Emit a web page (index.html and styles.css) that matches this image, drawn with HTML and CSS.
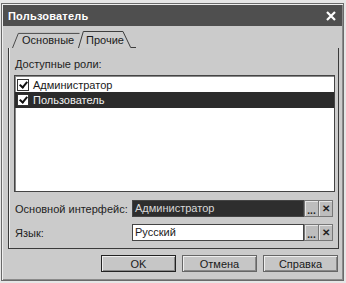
FILE: index.html
```html
<!DOCTYPE html>
<html lang="ru">
<head>
  <meta charset="UTF-8">
  <title>Пользователь</title>
  <link rel="stylesheet" href="styles.css">
</head>
<body>
  <div class="window">
    <div class="titlebar">
      <span class="title">Пользователь</span>
      <svg class="close" width="10" height="10" viewBox="0 0 10 10">
        <path d="M1 1 L9 9 M9 1 L1 9" stroke="#fff" stroke-width="2.2"/>
      </svg>
    </div>

    <!-- Tabs -->
    <div class="tabs">
      <div class="tab">
        <svg class="tab-shape" width="70" height="17" viewBox="0 0 70 17" preserveAspectRatio="none">
          <path d="M0.5 17 L6.5 1.5 L69.5 1.5" fill="none" stroke="#444" stroke-width="1"/>
        </svg>
        <span>Основные</span>
      </div>
      <div class="tab active">
        <svg class="tab-shape" width="60" height="18" viewBox="0 0 60 18" preserveAspectRatio="none">
          <path d="M0.5 18 L5.5 0.5 L46.5 0.5 L54.5 17.5 L60 17.5" fill="#cdcdcd" stroke="#333" stroke-width="1"/>
        </svg>
        <span>Прочие</span>
      </div>
    </div>

    <div class="panel">
      <div class="caption">Доступные роли:</div>
      <ul class="roles">
        <li><span class="check"></span>Администратор</li>
        <li class="selected"><span class="check"></span>Пользователь</li>
      </ul>

      <div class="field">
        <label>Основной интерфейс:</label>
        <div class="input dark">Администратор</div>
        <span class="mini dots">...</span>
        <span class="mini clear">✕</span>
      </div>
      <div class="field">
        <label>Язык:</label>
        <div class="input">Русский</div>
        <span class="mini dots">...</span>
        <span class="mini clear">✕</span>
      </div>
    </div>

    <div class="buttons">
      <button class="default">OK</button>
      <button>Отмена</button>
      <button>Справка</button>
    </div>
  </div>
</body>
</html>
```

FILE: styles.css
```css
body {
  margin: 0;
  background-color: #e6e6e6;
  font-family: "Liberation Sans", Arial, sans-serif;
  font-size: 11px;
  color: #1a1a1a;
}

.window {
  margin: 3px 0 0 1px;
  width: 341px;
  height: 276px;
  background-color: #cbcbcb;
  border: 1px solid #6a6a6a;
  box-shadow: inset 1px 1px 0 #efefef, inset -1px -1px 0 #8a8a8a;
  display: flex;
  flex-direction: column;
}

.titlebar {
  height: 21px;
  margin: 1px 1px 0 1px;
  background-color: #4f4f4f;
  color: #fff;
  display: flex;
  align-items: center;
  justify-content: space-between;
  padding: 0 6px 0 5px;
}

.title {
  font-weight: bold;
  font-size: 11px;
  letter-spacing: 0.2px;
}

.tabs {
  display: flex;
  height: 22px;
  padding-left: 10px;
  align-items: flex-end;
}

.tab {
  position: relative;
  height: 16px;
  width: 68px;
  display: flex;
  align-items: center;
  padding-left: 10px;
  box-sizing: border-box;
}

.tab.active {
  width: 58px;
  height: 17px;
  margin-left: -2px;
  padding-left: 8px;
}

.tab span {
  position: relative;
}

.tab-shape {
  position: absolute;
  left: 0;
  top: 0;
  width: 100%;
  height: 100%;
}

.panel {
  margin: 0 4px 0 6px;
  border: 1px solid #3a3a3a;
  border-top: none;
  height: 201px;
  box-sizing: border-box;
  box-shadow: inset 1px 0 0 #efefef;
  padding: 10px 3px 0 5px;
  display: flex;
  flex-direction: column;
}

.caption {
  height: 13px;
  line-height: 13px;
  margin-left: 1px;
  margin-bottom: 4px;
  color: #222;
}

.roles {
  list-style-type: none;
  margin: 0;
  padding: 0;
  height: 115px;
  background-color: #fff;
  border: 1px solid #444;
  box-shadow: inset 1px 1px 0 #888;
}

.roles li {
  height: 15px;
  display: flex;
  align-items: center;
  padding-left: 2px;
  margin-top: 1px;
}

.roles li.selected {
  background-color: #2b2b2b;
  color: #f2f2f2;
  height: 16px;
  margin-top: 0;
}

.check {
  width: 10px;
  height: 10px;
  border: 1px solid #333;
  background-color: #fff;
  margin-right: 4px;
  position: relative;
}

.check::after {
  content: "";
  position: absolute;
  left: 3px;
  top: 0px;
  width: 3px;
  height: 6px;
  border-right: 2px solid #111;
  border-bottom: 2px solid #111;
  transform: rotate(40deg);
}

.field {
  display: flex;
  align-items: center;
  height: 17px;
  margin-top: 7px;
}

.roles + .field {
  margin-top: 8px;
}

.field label {
  width: 117px;
  padding-left: 1px;
  color: #222;
}

.input {
  width: 168px;
  height: 15px;
  line-height: 15px;
  border: 1px solid #444;
  background-color: #fff;
  padding-left: 2px;
}

.input.dark {
  background-color: #2e2e2e;
  color: #d8d8d8;
}

.mini {
  width: 13px;
  height: 15px;
  background-color: #bdbdbd;
  border: 1px solid #777;
  box-shadow: inset 1px 1px 0 #e6e6e6;
  display: flex;
  align-items: center;
  justify-content: center;
  font-weight: bold;
  color: #222;
}

.dots {
  align-items: flex-end;
  line-height: 11px;
  font-size: 10px;
}

.clear {
  font-size: 10px;
  border-left: none;
}

.buttons {
  display: flex;
  justify-content: flex-end;
  gap: 6px;
  padding: 6px 5px 0 0;
}

button {
  width: 75px;
  height: 17px;
  padding: 0;
  font-family: "Liberation Sans", Arial, sans-serif;
  font-size: 11px;
  color: #1a1a1a;
  background-color: #c6c6c6;
  border: 1px solid #666;
  box-shadow: inset 1px 1px 0 #eee, inset -1px -1px 0 #888;
}

button.default {
  border: 1px solid #222;
}
```
